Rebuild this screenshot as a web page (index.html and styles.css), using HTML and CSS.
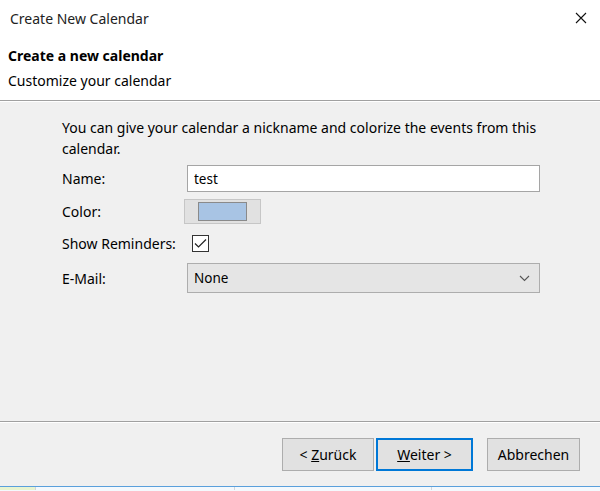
FILE: index.html
```html
<!DOCTYPE html>
<html lang="en">
<head>
    <meta charset="UTF-8">
    <meta name="viewport" content="width=device-width, initial-scale=1.0">
    <title>Create New Calendar</title>
    <link rel="stylesheet" href="styles.css">
</head>
<body>
    <div class="dialog">
        <div class="titlebar">
            <span class="title">Create New Calendar</span>
            <svg class="close" width="12" height="12" viewBox="0 0 12 12">
                <path d="M1 1 L11 11 M11 1 L1 11" stroke="#111" stroke-width="1.1" fill="none"/>
            </svg>
        </div>
        <div class="header">
            <div class="header-title">Create a new calendar</div>
            <div class="header-sub">Customize your calendar</div>
        </div>
        <div class="content">
            <p class="intro">You can give your calendar a nickname and colorize the events from this calendar.</p>
            <div class="form-row row-name">
                <label for="name">Name:</label>
                <input type="text" id="name" value="test">
            </div>
            <div class="form-row row-color">
                <label>Color:</label>
                <button class="color-btn"><span class="swatch"></span></button>
            </div>
            <div class="form-row row-check">
                <label>Show Reminders:</label>
                <span class="checkbox">
                    <svg width="13" height="11" viewBox="0 0 13 11">
                        <path d="M1 5.5 L4.5 9 L12 1.5" stroke="#222" stroke-width="1.2" fill="none"/>
                    </svg>
                </span>
            </div>
            <div class="form-row row-mail">
                <label>E-Mail:</label>
                <div class="select">
                    <span>None</span>
                    <svg width="11" height="7" viewBox="0 0 11 7">
                        <path d="M1 1 L5.5 5.5 L10 1" stroke="#555" stroke-width="1.1" fill="none"/>
                    </svg>
                </div>
            </div>
        </div>
        <div class="footer">
            <button class="btn">&lt; <u>Z</u>urück</button>
            <button class="btn btn-default"><u>W</u>eiter &gt;</button>
            <button class="btn btn-cancel">Abbrechen</button>
        </div>
        <div class="taskbar">
            <span class="task task-first"></span>
            <span class="task task-a"></span>
            <span class="task task-b"></span>
            <span class="task task-c"></span>
        </div>
    </div>
</body>
</html>
```

FILE: styles.css
```css
html, body {
    margin: 0;
    padding: 0;
}
body {
    font-family: "Noto Sans", "DejaVu Sans", sans-serif;
    font-size: 14px;
    color: #000;
    background: #f0f0f0;
}
.dialog {
    width: 600px;
    height: 491px;
    display: flex;
    flex-direction: column;
    overflow: hidden;
}
.titlebar {
    height: 36px;
    background: #fff;
    display: flex;
    align-items: center;
    justify-content: space-between;
    padding: 0 13px 0 10px;
}
.title {
    font-size: 14px;
    color: #222;
}
.header {
    background: #fff;
    height: 64px;
    padding: 7px 8px 0;
    box-sizing: border-box;
    line-height: 25px;
    font-size: 14px;
}
.header-title {
    font-weight: bold;
}
.content {
    flex: 1;
    border-top: 1px solid #a0a0a0;
    box-shadow: inset 0 1px 0 #fff;
    padding: 16px 0 0 62px;
    font-size: 14px;
}
.intro {
    margin: 0;
    width: 475px;
    line-height: 21px;
}
.form-row {
    display: flex;
    align-items: center;
    margin-top: 7px;
}
.form-row label {
    width: 125px;
    white-space: nowrap;
}
.row-name {
    margin-top: 6px;
    height: 27px;
}
.row-name input {
    width: 353px;
    height: 27px;
    box-sizing: border-box;
    border: 1px solid #a5a5a5;
    background: #fff;
    font: inherit;
    font-size: 13.5px;
    padding: 0 6px;
    outline: none;
}
.row-color {
    height: 25px;
}
.color-btn {
    margin-left: -3px;
    width: 77px;
    height: 25px;
    background: #e1e1e1;
    border: 1px solid #c6c6c6;
    padding: 0;
    display: flex;
    align-items: center;
    justify-content: center;
}
.swatch {
    display: block;
    width: 49px;
    height: 19px;
    box-sizing: border-box;
    background: #a8c4e4;
    border: 1px solid #8a8a8a;
}
.row-check {
    height: 25px;
}
.checkbox {
    margin-left: 5px;
    width: 17px;
    height: 17px;
    box-sizing: border-box;
    border: 1px solid #333;
    background: #fff;
    display: flex;
    align-items: center;
    justify-content: center;
}
.row-mail {
    height: 30px;
}
.select {
    width: 353px;
    height: 30px;
    box-sizing: border-box;
    background: #e5e5e5;
    border: 1px solid #adadad;
    display: flex;
    align-items: center;
    justify-content: space-between;
    padding: 0 9px 0 6px;
    font-size: 13.5px;
}
.footer {
    height: 65px;
    border-top: 1px solid #a0a0a0;
    box-shadow: inset 0 1px 0 #fff;
    box-sizing: border-box;
    display: flex;
    justify-content: flex-end;
    align-items: flex-start;
    padding: 16px 20px 0 0;
}
.btn {
    height: 33px;
    width: 92px;
    background: #e1e1e1;
    border: 1px solid #adadad;
    font: inherit;
    font-size: 14px;
    color: #000;
    padding: 0;
}
.btn-default {
    width: 97px;
    margin-left: 2px;
    border: 2px solid #0078d7;
}
.btn-cancel {
    width: 93px;
    margin-left: 14px;
}
.taskbar {
    height: 4px;
    border-top: 1px solid #5aa0dc;
    display: flex;
    background: #f4f9fd;
}
.task {
    height: 3px;
    border-right: 1px solid #cfd6dd;
}
.task-first {
    width: 35px;
    background: #e8f4d0;
}
.task-a {
    width: 198px;
}
.task-b {
    width: 196px;
}
.task-c {
    flex: 1;
    border-right: none;
}
```
